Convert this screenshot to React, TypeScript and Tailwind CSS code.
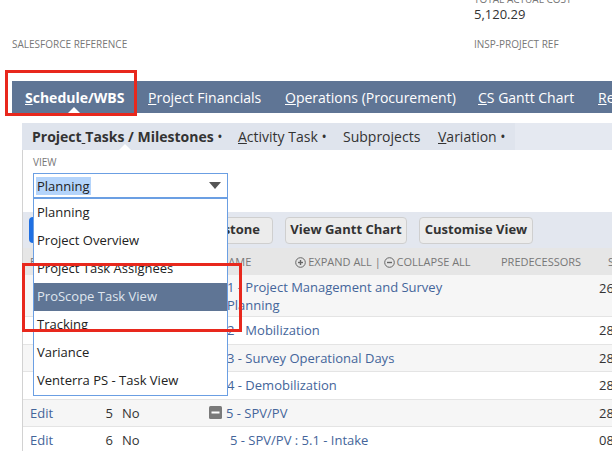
import React from 'react';

const views = [
  'Planning',
  'Project Overview',
  'Project Task Assignees',
  'ProScope Task View',
  'Tracking',
  'Variance',
  'Venterra PS - Task View',
];

type Row = { edit: boolean; num?: string; ms?: string; name: string; indent: string; icon?: boolean; start: string; tall?: boolean; alt: boolean };

const rows: Row[] = [
  { edit: false, name: '1 - Project Management and Survey Planning', indent: 'pl-[21px]', start: '26', tall: true, alt: true },
  { edit: false, name: '2 - Mobilization', indent: 'pl-[21px]', start: '28', alt: false },
  { edit: false, name: '3 - Survey Operational Days', indent: 'pl-[21px]', start: '28', alt: true },
  { edit: false, name: '4 - Demobilization', indent: 'pl-[21px]', start: '28', alt: false },
  { edit: true, num: '5', ms: 'No', name: '5 - SPV/PV', indent: 'pl-[3px]', icon: true, start: '28', alt: true },
  { edit: true, num: '6', ms: 'No', name: '5 - SPV/PV : 5.1 - Intake', indent: 'pl-[24px]', start: '08', alt: false },
];

function CircleIcon({ plus }: { plus?: boolean }) {
  return (
    <svg width="11" height="11" viewBox="0 0 11 11" className="inline-block mr-[2px] -mt-[2px]">
      <circle cx="5.5" cy="5.5" r="4.8" fill="none" stroke="#666" strokeWidth="1" />
      <path d="M3 5.5h5" stroke="#666" strokeWidth="1.4" />
      {plus && <path d="M5.5 3v5" stroke="#666" strokeWidth="1.4" />}
    </svg>
  );
}

export default function App() {
  return (
    <div className="w-[612px] h-[451px] overflow-hidden bg-white relative font-['Open_Sans',sans-serif]">
      {/* record header */}
      <div className="grid grid-cols-[462px_1fr] pl-3 -mt-[7px]">
        <div />
        <div>
          <div className="text-[10px] leading-[12px] text-[#777] uppercase">Total Actual Cost</div>
          <div className="text-[13px] leading-[18px] text-[#333]">5,120.29</div>
        </div>
        <div className="mt-[14px] text-[10px] leading-[14px] text-[#777] uppercase">Salesforce Reference</div>
        <div className="mt-[14px] text-[10px] leading-[14px] text-[#777] uppercase">INSP-Project Ref</div>
      </div>

      {/* main tabs */}
      <div className="mt-[30px] ml-3 h-[32px] bg-[#5f7595] flex items-center text-[14px] text-white whitespace-nowrap">
        <div className="relative shrink-0 w-[124px] h-full flex items-center pl-[13px] font-bold">
          <span><u>S</u>chedule/WBS</span>
          <div className="absolute bottom-0 left-[56px] w-0 h-0 border-l-[6px] border-r-[6px] border-b-[6px] border-l-transparent border-r-transparent border-b-white" />
        </div>
        <div className="shrink-0 w-[136px] pl-[12px]"><u>P</u>roject Financials</div>
        <div className="shrink-0 w-[194px] pl-[13px]"><u>O</u>perations (Procurement)</div>
        <div className="shrink-0 w-[120px] pl-[12px]"><u>C</u>S Gantt Chart</div>
        <div className="shrink-0 pl-[12px]"><u>R</u>esources</div>
      </div>

      {/* sub tabs */}
      <div className="mt-[10px] ml-[22px] h-[27px] flex text-[14px] text-[#333] whitespace-nowrap">
        <div className="relative shrink-0 w-[206px] bg-[#dfe4ed] flex items-center pl-[10px] font-bold">
          <span>Project<u> </u>Tasks / Milestones<span className="font-normal"> •</span></span>
          <div className="absolute bottom-0 left-[97px] w-0 h-0 border-l-[6px] border-r-[6px] border-b-[6px] border-l-transparent border-r-transparent border-b-white" />
        </div>
        <div className="shrink-0 w-[105px] bg-[#dfe4ed] flex items-center pl-[10px]"><span><u>A</u>ctivity Task •</span></div>
        <div className="shrink-0 w-[95px] bg-[#dfe4ed] flex items-center pl-[10px]">Subprojects</div>
        <div className="shrink-0 w-[87px] bg-[#dfe4ed] flex items-center pl-[10px]"><span><u>V</u>ariation •</span></div>
        <div className="flex-1 bg-[#e5e9f1]" />
      </div>

      {/* content panel */}
      <div className="ml-[22px] border-l border-[#d2d2d2] relative h-[301px]">
        <div className="pt-[6px] pl-[10px]">
          <div className="text-[10px] leading-[12px] text-[#777] uppercase">View</div>
          <div className="mt-[5px] w-[195px] h-[25px] border border-[#6b9fe3] flex items-center justify-between pl-[2px] pr-[6px]">
            <span className="bg-[#b4d4fb] text-[13px] leading-[18px] text-[#222] px-[1px]">Planning</span>
            <svg width="12" height="7" viewBox="0 0 12 7"><path d="M0 0h12L6 7z" fill="#555" /></svg>
          </div>
        </div>

        <div className="mt-[14px] h-[36px] bg-[#e3e7ef] flex items-center px-[6px] gap-[12px] text-[13px] font-bold text-[#333] whitespace-nowrap">
          <div className="shrink-0 w-[113px] h-[26px] rounded-[4px] bg-[#1f6fe2] text-white flex items-center justify-center">Add Task</div>
          <div className="shrink-0 w-[119px] h-[27px] rounded-[4px] bg-[#ececec] border border-[#cfcfcf] flex items-center justify-center">Add Milestone</div>
          <div className="shrink-0 w-[122px] h-[27px] rounded-[4px] bg-[#ececec] border border-[#cfcfcf] flex items-center justify-center">View Gantt Chart</div>
          <div className="shrink-0 w-[114px] h-[27px] rounded-[4px] bg-[#ececec] border border-[#cfcfcf] flex items-center justify-center">Customise View</div>
        </div>

        {/* table */}
        <div className="h-[27px] pt-[2px] bg-[#e6e6e6] flex items-center text-[11px] text-[#777] uppercase whitespace-nowrap">
          <div className="shrink-0 w-[62px] pl-[7px]">Edit</div>
          <div className="shrink-0 w-[28px]" />
          <div className="shrink-0 w-[93px]" />
          <div className="shrink-0 w-[293px] pl-[14px] flex">
            <span>Name</span>
            <span className="ml-[44px]"><CircleIcon plus />Expand All | <CircleIcon />Collapse All</span>
          </div>
          <div className="shrink-0 w-[100px] pl-[2px]">Predecessors</div>
          <div className="shrink-0 pl-[9px]">Start Date</div>
        </div>
        {rows.map((r, i) => (
          <div
            key={i}
            className={`flex items-center text-[13px] leading-[18px] border-b border-[#e4e4e4] whitespace-nowrap ${r.tall ? 'h-[42px]' : 'h-[27.5px]'} ${r.alt ? 'bg-[#f6f6f6]' : 'bg-white'}`}
          >
            <div className="shrink-0 w-[62px] pl-[7px] text-[#44659a]">{r.edit ? 'Edit' : ''}</div>
            <div className="shrink-0 w-[28px] text-right text-[#333]">{r.num}</div>
            <div className="shrink-0 w-[93px] pl-[9px] text-[#333]">{r.ms}</div>
            <div className={`shrink-0 w-[293px] flex items-center ${r.indent}`}>
              {r.icon && (
                <svg width="13" height="13" viewBox="0 0 13 13" className="mr-[4px] shrink-0">
                  <rect x="0" y="0" width="13" height="13" rx="1.5" fill="#7a7a7a" />
                  <rect x="2.5" y="5.5" width="8" height="2" fill="#fff" />
                </svg>
              )}
              <span className="text-[#44659a] whitespace-normal max-w-[225px]">{r.name}</span>
            </div>
            <div className="shrink-0 w-[100px]" />
            <div className={`shrink-0 text-[#333] ${r.tall ? 'self-start pt-[4px]' : ''}`}>{r.start}/11/2023</div>
          </div>
        ))}

        {/* view dropdown */}
        <div className="absolute left-[10px] top-[48px] w-[195px] bg-white border border-[#6b9fe3] text-[13px] text-[#222] whitespace-nowrap">
          {views.map((v, i) => (
            <div
              key={v}
              className={`h-[28px] flex items-center pl-[3px] ${i === 3 ? 'bg-[#5f7595] text-[#dfe5ee]' : ''}`}
            >
              {v}
            </div>
          ))}
        </div>
      </div>

      {/* annotation boxes */}
      <div className="absolute left-[5px] top-[70px] w-[132px] h-[46px] border-[3px] border-[#e8281d]" />
      <div className="absolute left-[22px] top-[263px] w-[220px] h-[69px] border-[3px] border-[#e8281d]" />
    </div>
  );
}
